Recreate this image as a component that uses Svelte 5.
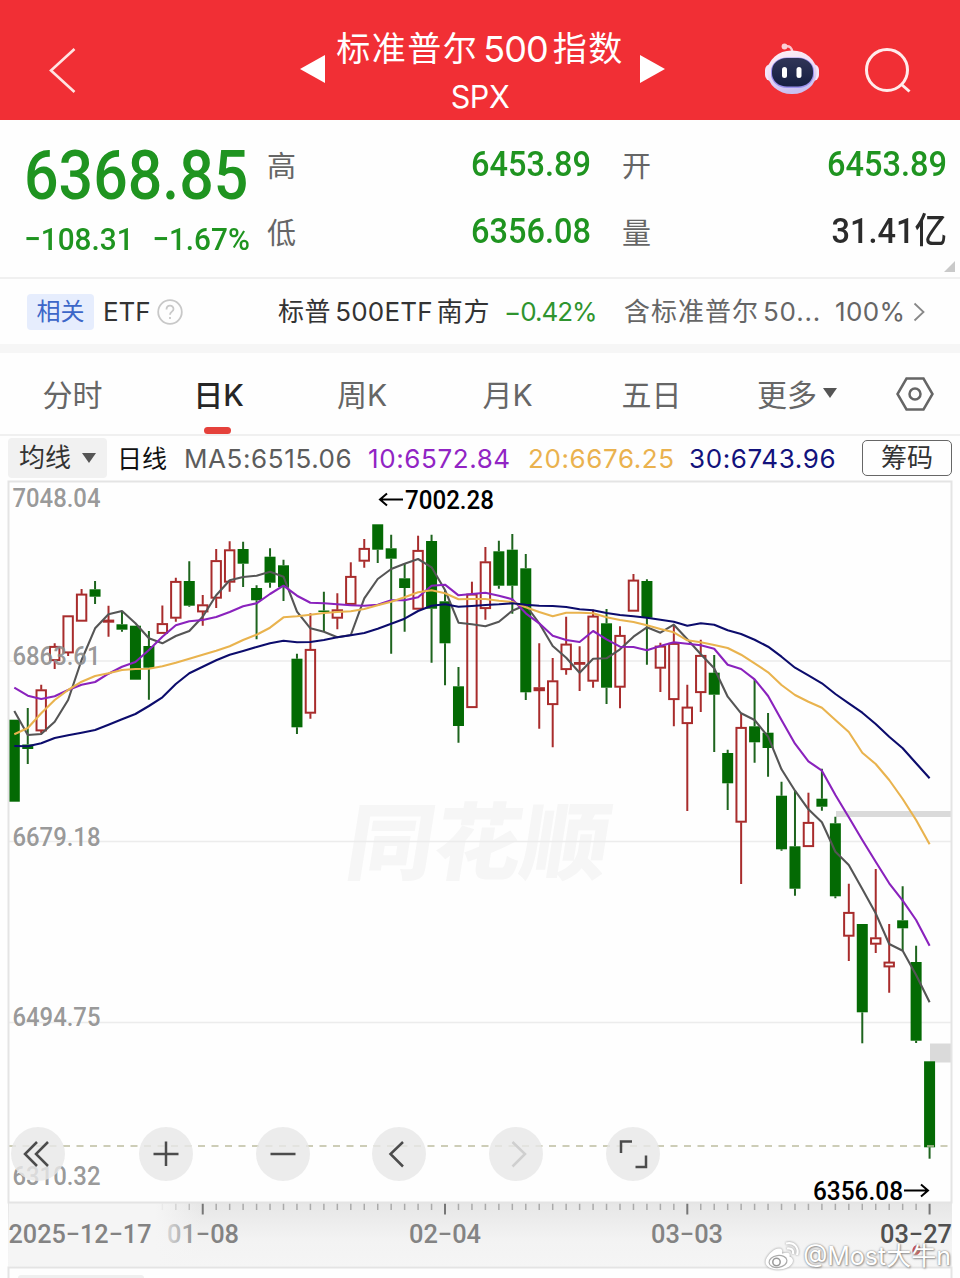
<script lang="ts">
  // [up, high, body top, body bottom, low] in chart pixels, one row per trading day
  const candles = [
    [0, 719.7, 719.7, 801.7, 801.7], [0, 708, 744.5, 749, 764], [1, 684.7, 689.7, 731, 733],
    [1, 643.3, 646.3, 660.7, 669], [1, 615.7, 615.7, 653, 656], [1, 589, 594, 621.3, 621.3],
    [0, 581, 589.3, 596.7, 604], [1, 605.7, 620, 622.3, 636.7], [0, 611.7, 624.3, 629.7, 631.7],
    [0, 625.7, 625.7, 679.7, 679.7], [0, 631, 646, 667.7, 699.7], [1, 605.5, 623.5, 633.5, 633.5],
    [1, 577.7, 581.3, 618.3, 621.7], [0, 561.3, 581, 605.7, 606.7], [1, 595, 604.7, 612, 625.7],
    [1, 549, 560.5, 598.3, 608], [1, 541.3, 549.7, 582.3, 591.7], [0, 541.7, 549, 563.7, 587],
    [0, 585.3, 588, 600.3, 639.3], [0, 548.3, 556.7, 582.7, 587.7], [0, 559.7, 565.3, 587.3, 601],
    [0, 653.7, 658.7, 727.3, 734], [1, 613.3, 649.3, 713.3, 718.7], [0, 591.7, 610.5, 612, 631.7],
    [1, 593.3, 609.7, 618.3, 629.3], [1, 562.3, 576.3, 604.5, 604.5], [1, 539, 548.3, 561.3, 567.7],
    [0, 524.3, 524.3, 549.7, 563], [0, 534.7, 548.3, 558.7, 653.7], [0, 563.3, 578.3, 588, 631.7],
    [1, 535.7, 550.3, 609.3, 609.3], [0, 534.7, 541, 608.7, 662.7], [0, 590, 601.3, 643.3, 685.3],
    [0, 667, 686.3, 726, 742.7], [1, 581.7, 594, 707.7, 707.7], [1, 547, 561.7, 608.7, 619.7],
    [0, 540.7, 551.3, 585.7, 588.7], [0, 534, 549.7, 585.7, 613.7], [0, 554, 568.3, 692.3, 700],
    [1, 643.3, 687.6, 690.8, 728.7], [1, 658, 680.7, 704.7, 747.3], [1, 616.7, 644, 669.7, 674.7],
    [1, 646.3, 662.4, 663.8, 691], [1, 609.7, 616, 681.3, 687.7], [0, 609, 623.3, 687.7, 704],
    [1, 626.3, 635.3, 687.3, 708.3], [1, 574, 580, 611.3, 611.3], [0, 579.3, 581, 617.7, 664.7],
    [1, 642.7, 646, 668.3, 692], [1, 624.7, 643.3, 699.7, 726.3], [1, 684.7, 707, 723.7, 811],
    [1, 639.7, 655.3, 692.7, 712], [0, 655, 672.7, 694.7, 752], [0, 749.7, 753, 783.3, 810],
    [1, 713.3, 727.3, 822.3, 884], [0, 679.3, 726.3, 742.3, 762.7], [0, 713, 732.7, 748, 776.7],
    [0, 781.7, 795.7, 849.3, 850.7], [0, 790, 846.3, 888.7, 895.7], [1, 792.7, 822.3, 846.7, 846.7],
    [0, 768.7, 798.7, 806.7, 810.7], [0, 816.7, 823.3, 896.3, 898.3], [1, 883.7, 912.3, 936.3, 961],
    [0, 924, 924, 1012.3, 1043.3], [1, 869, 937.7, 944.3, 953], [1, 924, 962, 967, 992.7],
    [0, 886.3, 920.3, 928.3, 950.7], [0, 945.7, 962, 1040.7, 1043], [0, 1061.3, 1061.3, 1147.3, 1158.7]
  ];

  const averages = [
    {
      name: 'ma5',
      ys: [711, 735, 734, 721.7, 700, 660, 628.3, 614.3, 611, 623.3, 638.3, 643.3, 636, 631, 616.7, 595.3, 580.3, 577, 575.7, 571.7, 576.7, 611.7, 628.3, 631.7, 637.3, 635, 598.3, 579, 569, 563.7, 559, 567.3, 590, 622.7, 624.3, 626.3, 621.7, 610.7, 605, 623.3, 646, 657.7, 672.7, 658.7, 658.3, 649.3, 636.7, 627.3, 632.7, 624.7, 639.3, 654.3, 668.3, 696.7, 713.3, 720, 736.7, 769.3, 790.7, 809.3, 822.3, 851.7, 865, 889, 913.3, 944, 950.7, 975, 1002.3]
    },
    {
      name: 'ma10',
      ys: [687.7, 695.7, 699, 696.3, 690, 684.7, 682, 673.7, 666.7, 662, 650, 636.7, 625.3, 621.3, 620, 617, 612, 606.3, 603.3, 594, 585.7, 595.7, 602.7, 603.3, 604.3, 605.3, 605.7, 604.7, 600.3, 600.3, 597.3, 585.7, 584.7, 595.3, 594, 592.7, 595.7, 599.3, 613.3, 623.3, 635.7, 640, 642, 631, 639.3, 646.7, 647, 650.3, 646, 642.3, 643.7, 645.3, 648.7, 664.7, 669, 679.3, 696, 720, 743.7, 761.3, 770.7, 795, 817.3, 840, 861.7, 883.3, 900.7, 920, 945.7]
    },
    {
      name: 'ma20',
      ys: [734.3, 728, 713.3, 700, 690, 681.7, 676, 673.3, 670, 669, 668.7, 666.3, 662.7, 658.7, 654.7, 650.7, 646.3, 640, 634.7, 627.7, 617.3, 616.3, 614.7, 613, 612, 611.3, 609, 605.3, 601.7, 597.3, 592.3, 590.3, 593.3, 599.3, 599, 599, 600.7, 602, 607.3, 612, 616.3, 612.7, 612.7, 613.3, 617.3, 620, 622, 625.3, 629, 632.3, 640.3, 642.3, 645, 648, 654.7, 663.3, 672.3, 685, 695, 701.7, 707.7, 720, 732, 752.7, 764, 780, 799, 820, 844.3]
    },
    {
      name: 'ma30',
      ys: [746, 746.3, 743.3, 738, 735.3, 732.7, 730, 724.7, 719.3, 714, 706, 697.3, 684, 673.3, 666.7, 660.3, 654.7, 651, 647, 643.3, 640.7, 642.3, 642, 640, 637.3, 635.3, 633, 628.7, 623.7, 618.7, 611, 605.7, 604.3, 606.7, 606, 605, 604.3, 603.3, 604.7, 605.7, 606, 607, 609.3, 610.3, 613, 615, 616.3, 617.7, 619.7, 621.7, 625.7, 623.3, 624.7, 630.3, 634, 639.7, 646.7, 656.7, 667.7, 675.3, 683.3, 694, 703.3, 712.7, 724, 736.7, 748.3, 763.3, 778.3]
    }
  ];

  const scale = [
    { label: '7048.04', y: 507 },
    { label: '6863.61', y: 665 },
    { label: '6679.18', y: 846 },
    { label: '6494.75', y: 1026 },
    { label: '6310.32', y: 1185 }
  ];

  const dates = [
    { label: '01−08', x: 167, tone: 'mid' },
    { label: '02−04', x: 409, tone: 'mid' },
    { label: '03−03', x: 651, tone: 'mid' },
    { label: '03−27', x: 880, tone: 'dark' }
  ];

  const tabs = ['分时', '日K', '周K', '月K', '五日', '更多'];
  let active = $state('日K');

  const dayX = (i: number) => 14.3 + i * 13.46;
  const toPoints = (ys: number[]) => ys.map((y, i) => `${dayX(i).toFixed(1)},${y}`).join(' ');
  const ticks = Array.from({ length: 58 }, (_, k) => k + 11);
</script>

<main>
  <header>
    <svg class="back" viewBox="0 0 30 50"><path d="M26.500 4L3 25.500L26.500 47" /></svg>
    <div class="switcher">
      <svg class="arrow" viewBox="0 0 26 28"><path d="M25 0V28L0 14z" /></svg>
      <div class="title">
        <h1><span>标准普尔</span><b>500</b><span>指数</span></h1>
        <small>SPX</small>
      </div>
      <svg class="arrow" viewBox="0 0 26 28"><path d="M1 0V28L26 14z" /></svg>
    </div>
    <svg class="robot" viewBox="0 0 56 54">
      <defs>
        <linearGradient id="shell" x1="0" y1="0" x2="0.3" y2="1">
          <stop offset="0" stop-color="#fff3f4" />
          <stop offset="0.5" stop-color="#f1dff6" />
          <stop offset="1" stop-color="#c9c0f2" />
        </linearGradient>
        <linearGradient id="face" x1="0" y1="0" x2="0" y2="1">
          <stop offset="0" stop-color="#303557" />
          <stop offset="1" stop-color="#151e42" />
        </linearGradient>
      </defs>
      <path d="M21 4.500Q28 3 28.500 11" fill="none" stroke="#fbc6cf" stroke-width="2.400" />
      <circle cx="20.500" cy="4.500" r="2.900" fill="#fbd0d6" />
      <rect x="1" y="22" width="54" height="17" rx="6" fill="#f3e6fa" />
      <rect x="3.500" y="8.500" width="49" height="43.500" rx="24" ry="21" fill="url(#shell)" />
      <rect x="7" y="15.500" width="43" height="30.500" rx="16" ry="14" fill="#9a90ee" />
      <rect x="8" y="16" width="41" height="28.500" rx="15" ry="13" fill="url(#face)" />
      <rect x="18" y="25" width="5" height="11" rx="2.500" fill="#fff" />
      <rect x="32.500" y="25" width="5" height="11" rx="2.500" fill="#fff" />
    </svg>
    <svg class="search" viewBox="0 0 48 48">
      <circle cx="23" cy="23" r="20.500" />
      <path d="M37 37L45.500 44.500" />
    </svg>
  </header>

  <section class="quote">
    <div class="last">
      <strong>6368.85</strong>
      <p><span>−108.31</span><span>−1.67%</span></p>
    </div>
    <dl>
      <dt>高</dt><dd>6453.89</dd>
      <dt class="second">开</dt><dd>6453.89</dd>
      <dt>低</dt><dd>6356.08</dd>
      <dt class="second">量</dt><dd class="volume">31.41<i>亿</i></dd>
    </dl>
    <svg class="corner" viewBox="0 0 11 11"><path d="M11 0V11H0z" /></svg>
  </section>

  <section class="related">
    <span class="tag">相关</span>
    <span class="etf">ETF</span>
    <svg class="help" viewBox="0 0 26 26">
      <circle cx="13" cy="13" r="11.800" />
      <path d="M9.500 10.500C9.500 5.500 16.500 5.500 16.500 10C16.500 12.800 13 12.500 13 15.800M13 18v2" />
    </svg>
    <span class="fund">标普<em>500ETF</em>南方</span>
    <span class="change">−0.42%</span>
    <span class="holds">含标准普尔<em>50...</em></span>
    <span class="share">100%</span>
    <svg class="more" viewBox="0 0 12 20"><path d="M1.500 1.500L10.500 10L1.500 18.500" /></svg>
  </section>

  <nav>
    {#each tabs as tab}
      <button class:active={tab === active} onclick={() => (active = tab)}>
        {tab}{#if tab === '更多'}<svg class="caret" viewBox="0 0 14 10"><path d="M0 0H14L7 10z" /></svg>{/if}
      </button>
    {/each}
    <svg class="settings" viewBox="0 0 38 34">
      <path d="M10.500 1.500H27.500L36.500 17L27.500 32.500H10.500L1.500 17z" />
      <circle cx="19" cy="17" r="5.500" />
    </svg>
  </nav>

  <section class="legend">
    <span class="picker">均线<svg class="caret" viewBox="0 0 14 10"><path d="M0 0H14L7 10z" /></svg></span>
    <span class="period">日线</span>
    <span class="m5">MA5:6515.06</span>
    <span class="m10">10:6572.84</span>
    <span class="m20">20:6676.25</span>
    <span class="m30">30:6743.96</span>
    <span class="chips">筹码</span>
  </section>

  <section class="chart">
    <svg class="plot" viewBox="0 480 960 798">
      <defs>
        <linearGradient id="axis" x1="0" y1="0" x2="0" y2="1">
          <stop offset="0" stop-color="#e6e6e6" />
          <stop offset="0.6" stop-color="#f3f3f3" />
          <stop offset="1" stop-color="#f5f5f5" />
        </linearGradient>
        <linearGradient id="fade" x1="0" y1="0" x2="1" y2="0">
          <stop offset="0.76" stop-color="#f5f5f5" />
          <stop offset="1" stop-color="#f5f5f5" stop-opacity="0" />
        </linearGradient>
      </defs>

      <text class="brand" transform="translate(343 873) skewX(-9)" textLength="262" lengthAdjust="spacingAndGlyphs">同花顺</text>

      <path class="grid" d="M9 661H951M9 841.500H951M9 1022.500H951" />
      <rect x="836" y="811" width="115" height="6" fill="#dadada" />
      <rect x="930" y="1043.500" width="21" height="19" fill="#dadada" />

      {#each candles as [up, high, top, bottom, low], i}
        <g class={up ? 'up' : 'down'}>
          <path d="M{dayX(i)} {high}V{top}M{dayX(i)} {bottom}V{low}" />
          {#if up}
            <rect x={dayX(i) - 4.7} y={top + 0.6} width="9.400" height={Math.max(bottom - top - 1.2, 0.8)} />
          {:else}
            <rect x={dayX(i) - 5.5} y={top} width="11" height={bottom - top} />
          {/if}
        </g>
      {/each}

      {#each averages as line}
        <polyline class={line.name} points={toPoints(line.ys)} />
      {/each}

      <path class="current" d="M9 1146H951" />

      {#each scale as mark}
        <text class="price" x="12.500" y={mark.y} textLength="88" lengthAdjust="spacingAndGlyphs">{mark.label}</text>
      {/each}
      <path class="pointer" d="M403 499.500H380M387 493.500L380 499.500L387 505.500" />
      <text class="extreme" x="405" y="509" textLength="89" lengthAdjust="spacingAndGlyphs">7002.28</text>
      <text class="extreme" x="813" y="1199.500" textLength="90" lengthAdjust="spacingAndGlyphs">6356.08</text>
      <path class="pointer" d="M904 1190.500H928M921 1184.500L928 1190.500L921 1196.500" />

      <rect x="8" y="1202.500" width="944" height="64" fill="url(#axis)" />
      {#each ticks as i}
        <path class="tick" class:major={(i - 14) % 18 === 0} d="M{dayX(i)} 1203.500v{(i - 14) % 18 === 0 ? 11 : 6.500}" />
      {/each}
      {#each dates as date}
        <text class="date {date.tone}" x={date.x} y="1242.500" textLength="72" lengthAdjust="spacingAndGlyphs">{date.label}</text>
      {/each}
      <rect x="9" y="1203" width="192" height="63" fill="url(#fade)" />
      <text class="date" x="8.500" y="1242.500" textLength="143" lengthAdjust="spacingAndGlyphs">2025−12−17</text>

      <path class="frame" d="M8.500 1202.500V481.500H951.500V1202.500zM8.500 1278V1267.500H951.500V1278" />
      <rect x="18" y="1275" width="126" height="6" rx="3" fill="#efefef" />
      <ellipse cx="916.500" cy="1250" rx="4" ry="5" transform="rotate(25 916.500 1250)" fill="#d1504c" />
    </svg>

    <div class="controls">
      <button aria-label="first"><svg viewBox="0 0 54 54"><path d="M26 15L14 27L26 39M37 15L25 27L37 39" /></svg></button>
      <button aria-label="zoom in"><svg viewBox="0 0 54 54"><path d="M27 14.500V39M14.500 27H39.500" /></svg></button>
      <button aria-label="zoom out"><svg viewBox="0 0 54 54"><path d="M14.500 27H39.500" /></svg></button>
      <button aria-label="earlier"><svg viewBox="0 0 54 54"><path d="M31 15L18.500 27L31 39.500" /></svg></button>
      <button aria-label="later" disabled><svg viewBox="0 0 54 54"><path d="M23.500 15L36 27L23.500 39.500" /></svg></button>
      <button aria-label="full screen"><svg viewBox="0 0 54 54"><path d="M26 14.500H15V26M29.500 40H40V28.500" /></svg></button>
    </div>

    <div class="credit">
      <svg viewBox="0 0 36 30">
        <path class="body" d="M14 7.500C9 8 1.500 16 1.500 21C1.500 26 8 28.500 14.500 28.500C23 28.500 29 24 29 19.500C29 17 27 16 25.500 15.500C26.500 12.500 25 10.500 18 12.500C19 8.500 17.500 7 14 7.500z" />
        <ellipse class="eye" cx="14" cy="20.500" rx="9" ry="6" transform="rotate(-8 14 20.500)" />
        <circle class="iris" cx="12.500" cy="21" r="3.700" />
        <path class="wave" d="M22 2.500C30 0.500 35.500 7 33 14M23 7.500C27.500 6.500 30 9.500 29 13" />
      </svg>
      <span>@Most大牛n</span>
    </div>
  </section>
</main>

<style>
  :global(body) {
    background: #fff;
  }

  main {
    width: 960px;
    height: 1278px;
    overflow: hidden;
    display: flex;
    flex-direction: column;
    font-family: Inter, 'Noto Sans CJK SC', sans-serif;
    color: #333;
    background: #fefefe;
  }

  svg {
    display: block;
    flex: none;
  }

  button {
    border: 0;
    background: none;
    padding: 0;
    font: inherit;
    color: inherit;
  }

  header {
    height: 120px;
    flex: none;
    display: grid;
    grid-template-columns: 300px 365px 154px 1fr;
    align-items: center;
    background: #f12f35;
    color: #fff;
  }

  .back {
    width: 30px;
    height: 50px;
    margin: 20px 0 0 48px;
    fill: none;
    stroke: #ffe4e2;
    stroke-width: 2.6;
  }

  .switcher {
    display: flex;
    justify-content: space-between;
    align-items: center;
  }

  .arrow {
    width: 26px;
    height: 28px;
    margin-top: 18px;
    fill: #fff;
  }

  .title {
    width: 306px;
    text-align: center;
    padding-top: 23px;
    margin-left: -5px;
  }

  h1 {
    margin: 0;
    display: flex;
    justify-content: center;
    gap: 5px;
    font-size: 34px;
    line-height: 50px;
    font-weight: 400;
    letter-spacing: 1.5px;
  }

  h1 b {
    font-weight: 400;
    font-size: 36px;
    letter-spacing: -1px;
  }

  .title small {
    display: block;
    font-size: 30.5px;
    line-height: 46px;
    letter-spacing: -0.4px;
  }

  .robot {
    width: 56px;
    height: 54px;
    margin: 18px 0 0 99px;
  }

  .search {
    width: 48px;
    height: 48px;
    margin: 21px 0 0 45px;
    fill: none;
    stroke: #ffeceb;
    stroke-width: 3;
  }

  .quote {
    height: 157px;
    flex: none;
    display: flex;
    position: relative;
    border-bottom: 2px solid #f0f0f0;
    font-family: Roboto, 'Noto Sans CJK SC', sans-serif;
    color: #1f9420;
  }

  .last {
    width: 243px;
    padding: 21px 0 0 24px;
  }

  .last strong {
    display: block;
    font-size: 68px;
    line-height: 70px;
    font-weight: 500;
    white-space: nowrap;
    transform: scaleX(0.895);
    transform-origin: left;
  }

  .last p {
    margin: 7px 0 0;
    display: flex;
    gap: 20px;
    width: 246px;
    font-size: 32px;
    line-height: 42px;
    font-weight: 500;
    white-space: nowrap;
    transform: scaleX(0.93);
    transform-origin: left;
  }

  dl {
    margin: 0;
    padding-top: 11px;
    display: grid;
    grid-template-columns: 60px 264px 92px 264px;
    grid-template-rows: 67px 67px;
    align-items: center;
  }

  dt {
    font-size: 29px;
    line-height: 40px;
    color: #666;
    margin-top: 4px;
  }

  dt.second {
    padding-left: 31px;
  }

  dd {
    margin: 0;
    text-align: right;
    font-size: 35px;
    line-height: 42px;
    font-weight: 500;
    transform: scaleX(0.93);
    transform-origin: right;
  }

  dd.volume {
    color: #2b2b2b;
    margin-top: 0;
  }

  dd i {
    font-style: normal;
    font-size: 35px;
  }

  .corner {
    position: absolute;
    right: 5px;
    bottom: 5px;
    width: 11px;
    height: 11px;
    fill: #c9c9c9;
  }

  .related {
    height: 65px;
    flex: none;
    display: grid;
    grid-template-columns: 67px 53px 121px 227px 119px 210px 89px 12px;
    align-items: center;
    padding-left: 27px;
    border-bottom: 9px solid #f6f6f6;
    font-size: 26px;
    line-height: 36px;
    white-space: nowrap;
  }

  .tag {
    height: 36px;
    line-height: 35px;
    text-align: center;
    border-radius: 4px;
    background: #e6edfd;
    color: #3c66c8;
    font-size: 24px;
  }

  .etf {
    padding-left: 9px;
    letter-spacing: -0.1px;
  }

  .help {
    width: 26px;
    height: 26px;
    margin-left: 10px;
    fill: none;
    stroke: #c8c8c8;
    stroke-width: 1.8;
  }

  .fund {
    padding-left: 10px;
    margin-top: 1px;
    letter-spacing: 0.6px;
  }

  .related em {
    font-style: normal;
    margin: 0 4px;
    letter-spacing: 0.2px;
  }

  .change {
    padding-left: 9px;
    color: #2f942f;
    letter-spacing: -1px;
  }

  .holds {
    padding-left: 10px;
    margin-top: 1px;
    color: #666;
    letter-spacing: 1px;
  }

  .holds em {
    letter-spacing: 0.8px;
  }

  .share {
    padding-left: 11px;
    color: #666;
    letter-spacing: 0.4px;
  }

  .more {
    width: 12px;
    height: 20px;
    fill: none;
    stroke: #888;
    stroke-width: 1.8;
  }

  nav {
    height: 81px;
    flex: none;
    display: grid;
    grid-template-columns: 145px 147px 140px 151px 137px 154px 1fr;
    align-items: center;
    border-bottom: 2px solid #f0f0f0;
    font-size: 30px;
    color: #666;
  }

  nav button {
    height: 81px;
    position: relative;
    display: flex;
    align-items: center;
    justify-content: center;
    gap: 6px;
    padding-bottom: 2px;
  }

  nav button.active {
    color: #262626;
    font-weight: 500;
  }

  nav button.active::after {
    content: '';
    position: absolute;
    left: 59px;
    bottom: 0;
    width: 27px;
    height: 7px;
    border-radius: 4px;
    background: #e5413b;
  }

  .caret {
    width: 14px;
    height: 10px;
    fill: #555;
  }

  .settings {
    width: 38px;
    height: 34px;
    margin-left: 22px;
    fill: none;
    stroke: #666;
    stroke-width: 2.5;
  }

  .legend {
    height: 44px;
    flex: none;
    display: grid;
    grid-template-columns: 99px 77px 184px 160px 161px 173px 90px;
    align-items: center;
    padding-left: 8px;
    font-size: 26px;
    line-height: 36px;
    letter-spacing: 0.6px;
    white-space: nowrap;
  }

  .legend > span {
    padding-top: 1px;
  }

  .legend .picker {
    height: 40px;
    padding-top: 0;
    display: flex;
    align-items: center;
    justify-content: center;
    gap: 11px;
    border-radius: 4px;
    background: #f1f1f1;
    letter-spacing: 0;
  }

  .period {
    padding-left: 10px;
    color: #111;
    font-size: 25px;
    letter-spacing: 0;
  }

  .m5 {
    color: #5c5c5c;
  }

  .m10 {
    color: #9124c4;
  }

  .m20 {
    color: #eab24e;
  }

  .m30 {
    color: #12127c;
  }

  .legend .chips {
    width: 88px;
    height: 34px;
    padding-top: 0;
    line-height: 34px;
    text-align: center;
    border: 1px solid #666;
    border-radius: 5px;
    letter-spacing: 0;
  }

  .chart {
    position: relative;
    flex: none;
  }

  .plot {
    width: 960px;
    height: 798px;
    font-family: Roboto, 'Noto Sans CJK SC', sans-serif;
  }

  .brand {
    font: 900 84px 'Noto Sans CJK SC', sans-serif;
    fill: #f6f6f6;
  }

  .grid,
  .frame {
    fill: none;
    stroke: #ececec;
    stroke-width: 1.5;
  }

  .frame {
    stroke: #e4e4e4;
    stroke-width: 2;
  }

  .up {
    fill: none;
    stroke: #a82c2c;
    stroke-width: 2;
  }

  .down {
    fill: #046a04;
  }

  .down path {
    stroke: #1e641e;
    stroke-width: 2;
  }

  polyline {
    fill: none;
    stroke-width: 2.1;
    stroke-linejoin: round;
  }

  .ma5 {
    stroke: #555;
  }

  .ma10 {
    stroke: #8a22bd;
  }

  .ma20 {
    stroke: #e9b34e;
  }

  .ma30 {
    stroke: #0c0c6c;
  }

  .current {
    stroke: #bdbda0;
    stroke-width: 1.3;
    stroke-dasharray: 7 6.5;
  }

  .price {
    font-size: 26px;
    font-weight: 500;
    fill: #8c8c8c;
    fill-opacity: 0.9;
  }

  .extreme {
    font-size: 26px;
    font-weight: 500;
    fill: #000;
  }

  .pointer {
    fill: none;
    stroke: #000;
    stroke-width: 2;
  }

  .tick {
    stroke: #aaa;
    stroke-width: 1.5;
  }

  .tick.major {
    stroke: #777;
    stroke-width: 2;
  }

  .date {
    font-size: 26px;
    font-weight: 500;
    fill: #838383;
  }

  .date.dark {
    fill: #505050;
  }

  .controls {
    position: absolute;
    left: 11px;
    top: 647px;
    display: flex;
    gap: 62.8px;
  }

  .controls button {
    width: 54px;
    height: 54px;
    border-radius: 50%;
    background: rgba(232, 232, 232, 0.82);
  }

  .controls button:first-child {
    margin-right: 11px;
  }

  .controls svg {
    width: 54px;
    height: 54px;
    fill: none;
    stroke: #4c4c4c;
    stroke-width: 2.5;
  }

  .controls button:disabled svg {
    stroke: #cfcfcf;
  }

  .credit {
    position: absolute;
    right: 9px;
    bottom: 4px;
    display: flex;
    align-items: center;
    gap: 3px;
    font: 25px/36px Inter, 'Noto Sans CJK SC', sans-serif;
    color: #fff;
    text-shadow: 0 0 2px #777, 1px 1px 2px #999;
    white-space: nowrap;
  }

  .credit svg {
    width: 36px;
    height: 30px;
    overflow: visible;
    filter: drop-shadow(0 0 1px #888);
  }

  .credit .body {
    fill: #fff;
  }

  .credit .eye {
    fill: #fff;
    stroke: #aaa;
    stroke-width: 1.2;
  }

  .credit .iris {
    fill: #fff;
    stroke: #999;
    stroke-width: 1.5;
  }

  .credit .wave {
    fill: none;
    stroke: #fff;
    stroke-width: 2.2;
  }
</style>
